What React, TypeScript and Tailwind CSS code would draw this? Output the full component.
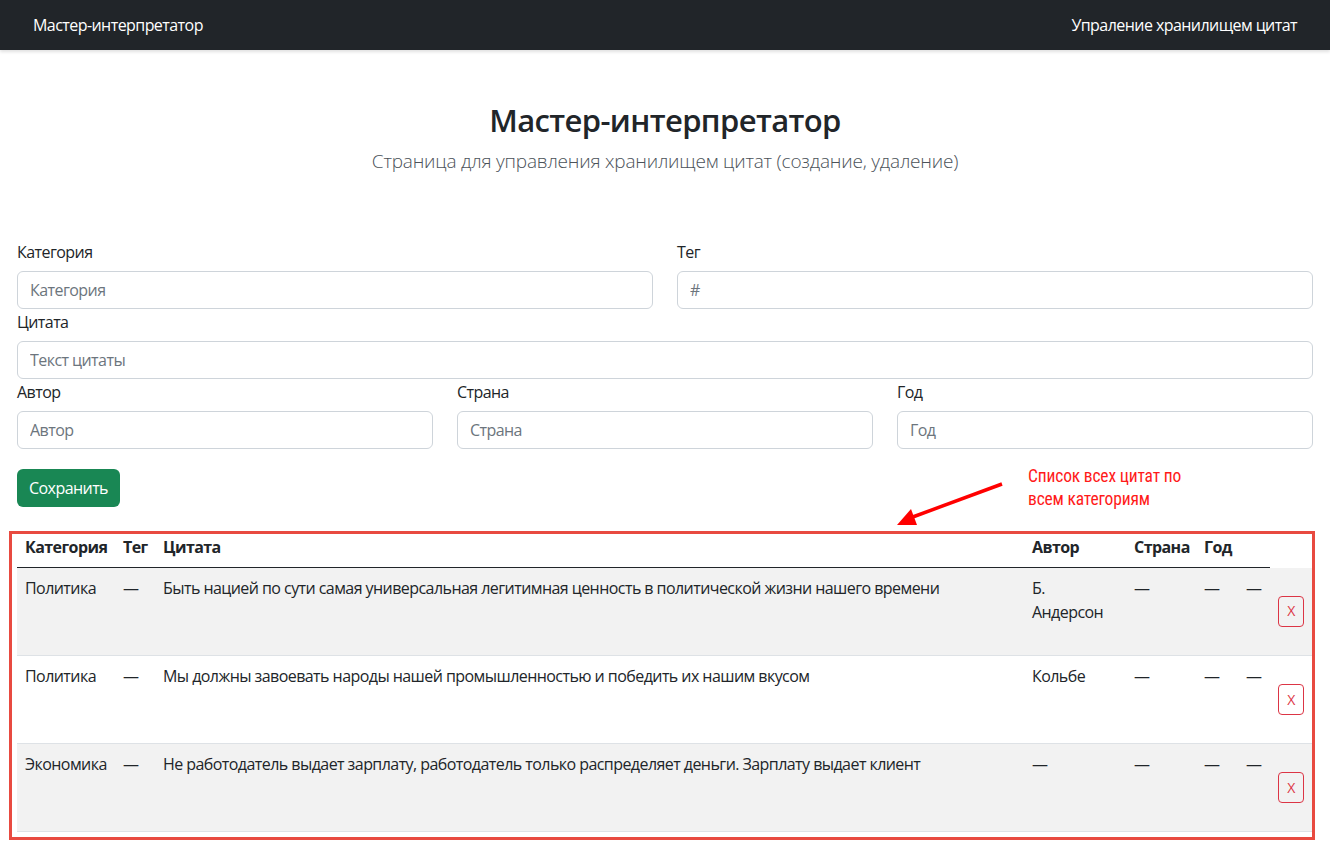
import React from "react";

const font = { fontFamily: "'Open Sans', 'Noto Sans', sans-serif" };

interface Quote {
  category: string;
  tag: string;
  text: string;
  author: React.ReactNode;
  country: string;
  year: string;
}

const quotes: Quote[] = [
  {
    category: "Политика",
    tag: "—",
    text: "Быть нацией по сути самая универсальная легитимная ценность в политической жизни нашего времени",
    author: (
      <>
        Б.
        <br />
        Андерсон
      </>
    ),
    country: "—",
    year: "—",
  },
  {
    category: "Политика",
    tag: "—",
    text: "Мы должны завоевать народы нашей промышленностью и победить их нашим вкусом",
    author: "Кольбе",
    country: "—",
    year: "—",
  },
  {
    category: "Экономика",
    tag: "—",
    text: "Не работодатель выдает зарплату, работодатель только распределяет деньги. Зарплату выдает клиент",
    author: "—",
    country: "—",
    year: "—",
  },
];

// label + input pair as in the form
const Field = ({ label, placeholder }: { label: string; placeholder: string }) => (
  <div className="flex flex-col mb-px">
    <label className="text-[16px] leading-6 mb-[7px] text-[#212529]">{label}</label>
    <input
      placeholder={placeholder}
      className="h-[38px] w-full rounded-[6px] border border-[#ced4da] bg-white px-3 text-[16px] text-[#212529] placeholder:text-[#6c757d] outline-none"
    />
  </div>
);

export default function App() {
  return (
    <div className="relative min-h-[844px] bg-white text-[#212529] tracking-[-0.035em]" style={font}>
      {/* --- Navbar --- */}
      <nav className="h-[50px] bg-[#212529] flex items-center justify-between px-[33px] shadow-[0_2px_3px_rgba(0,0,0,0.12)]">
        <span className="text-white text-[16px]">Мастер-интерпретатор</span>
        <span className="text-white text-[16px]">Упраление хранилищем цитат</span>
      </nav>

      {/* --- Title --- */}
      <div className="flex flex-col items-center pt-[52px]">
        <h3 className="text-[31px] font-semibold leading-[1.2] mb-[7px] tracking-[-0.02em]">Мастер-интерпретатор</h3>
        <p className="text-[19px] font-light leading-[30px] text-[#4b5259] tracking-[-0.01em]">
          Страница для управления хранилищем цитат (создание, удаление)
        </p>
      </div>

      <main className="px-[17px] pt-[64px]">
        {/* --- Form --- */}
        <div className="grid grid-cols-2 gap-x-6">
          <Field label="Категория" placeholder="Категория" />
          <Field label="Тег" placeholder="#" />
        </div>
        <Field label="Цитата" placeholder="Текст цитаты" />
        <div className="grid grid-cols-3 gap-x-6">
          <Field label="Автор" placeholder="Автор" />
          <Field label="Страна" placeholder="Страна" />
          <Field label="Год" placeholder="Год" />
        </div>
        <button className="mt-[19px] h-[38px] w-[103px] rounded-[6px] bg-[#198754] text-white text-[16px]">
          Сохранить
        </button>

        {/* --- Quotes table --- */}
        <table className="mt-[20px] w-[1296px] table-fixed border-collapse text-[16px] leading-6">
          <colgroup>
            <col className="w-[98px]" />
            <col className="w-[40px]" />
            <col className="w-[869px]" />
            <col className="w-[102px]" />
            <col className="w-[70px]" />
            <col className="w-[42px]" />
            <col className="w-[32px]" />
            <col className="w-[43px]" />
          </colgroup>
          <thead>
            <tr className="text-left">
              <th className="p-2 font-bold border-b border-[#212529]">Категория</th>
              <th className="p-2 font-bold border-b border-[#212529]">Тег</th>
              <th className="p-2 font-bold border-b border-[#212529]">Цитата</th>
              <th className="p-2 font-bold border-b border-[#212529]">Автор</th>
              <th className="p-2 font-bold border-b border-[#212529]">Страна</th>
              <th className="p-2 font-bold border-b border-[#212529]">Год</th>
              <th className="p-2 border-b border-[#212529]"></th>
              <th className="p-2"></th>
            </tr>
          </thead>
          <tbody>
            {quotes.map((q, i) => (
              <tr key={i} className={`border-b border-[#dee2e6] ${i % 2 === 0 ? "bg-[#f2f2f2]" : "bg-white"}`}>
                <td className="h-[88px] p-2 align-top">{q.category}</td>
                <td className="p-2 align-top">{q.tag}</td>
                <td className="p-2 align-top">{q.text}</td>
                <td className="p-2 align-top">{q.author}</td>
                <td className="p-2 align-top">{q.country}</td>
                <td className="p-2 align-top">{q.year}</td>
                <td className="p-2 align-top">—</td>
                <td className="p-2 align-middle">
                  <button className="h-[31px] w-[26px] rounded-[4px] border border-[#dc3545] text-[#dc3545] text-[14px] leading-none">
                    X
                  </button>
                </td>
              </tr>
            ))}
          </tbody>
        </table>
      </main>

      {/* --- Screenshot annotation --- */}
      <div className="pointer-events-none absolute left-[9px] top-[531px] w-[1306px] h-[309px] border-[3px] border-[#e84a40]" />
      <svg className="pointer-events-none absolute left-[890px] top-[475px]" width="120" height="60" viewBox="0 0 120 60">
        <line x1="112" y1="9" x2="20" y2="43" stroke="#ff0000" strokeWidth="3.5" />
        <polygon points="7,50 21,34 27,50" fill="#ff0000" />
      </svg>
      <div
        className="pointer-events-none absolute left-[1028px] top-[465px] text-[17.5px] leading-[23px] text-[#ff1a1a] tracking-[-0.01em]"
        style={{ fontFamily: "'Liberation Sans Narrow', 'Roboto Condensed', Roboto, sans-serif" }}
      >
        Список всех цитат по
        <br />
        всем категориям
      </div>
    </div>
  );
}
